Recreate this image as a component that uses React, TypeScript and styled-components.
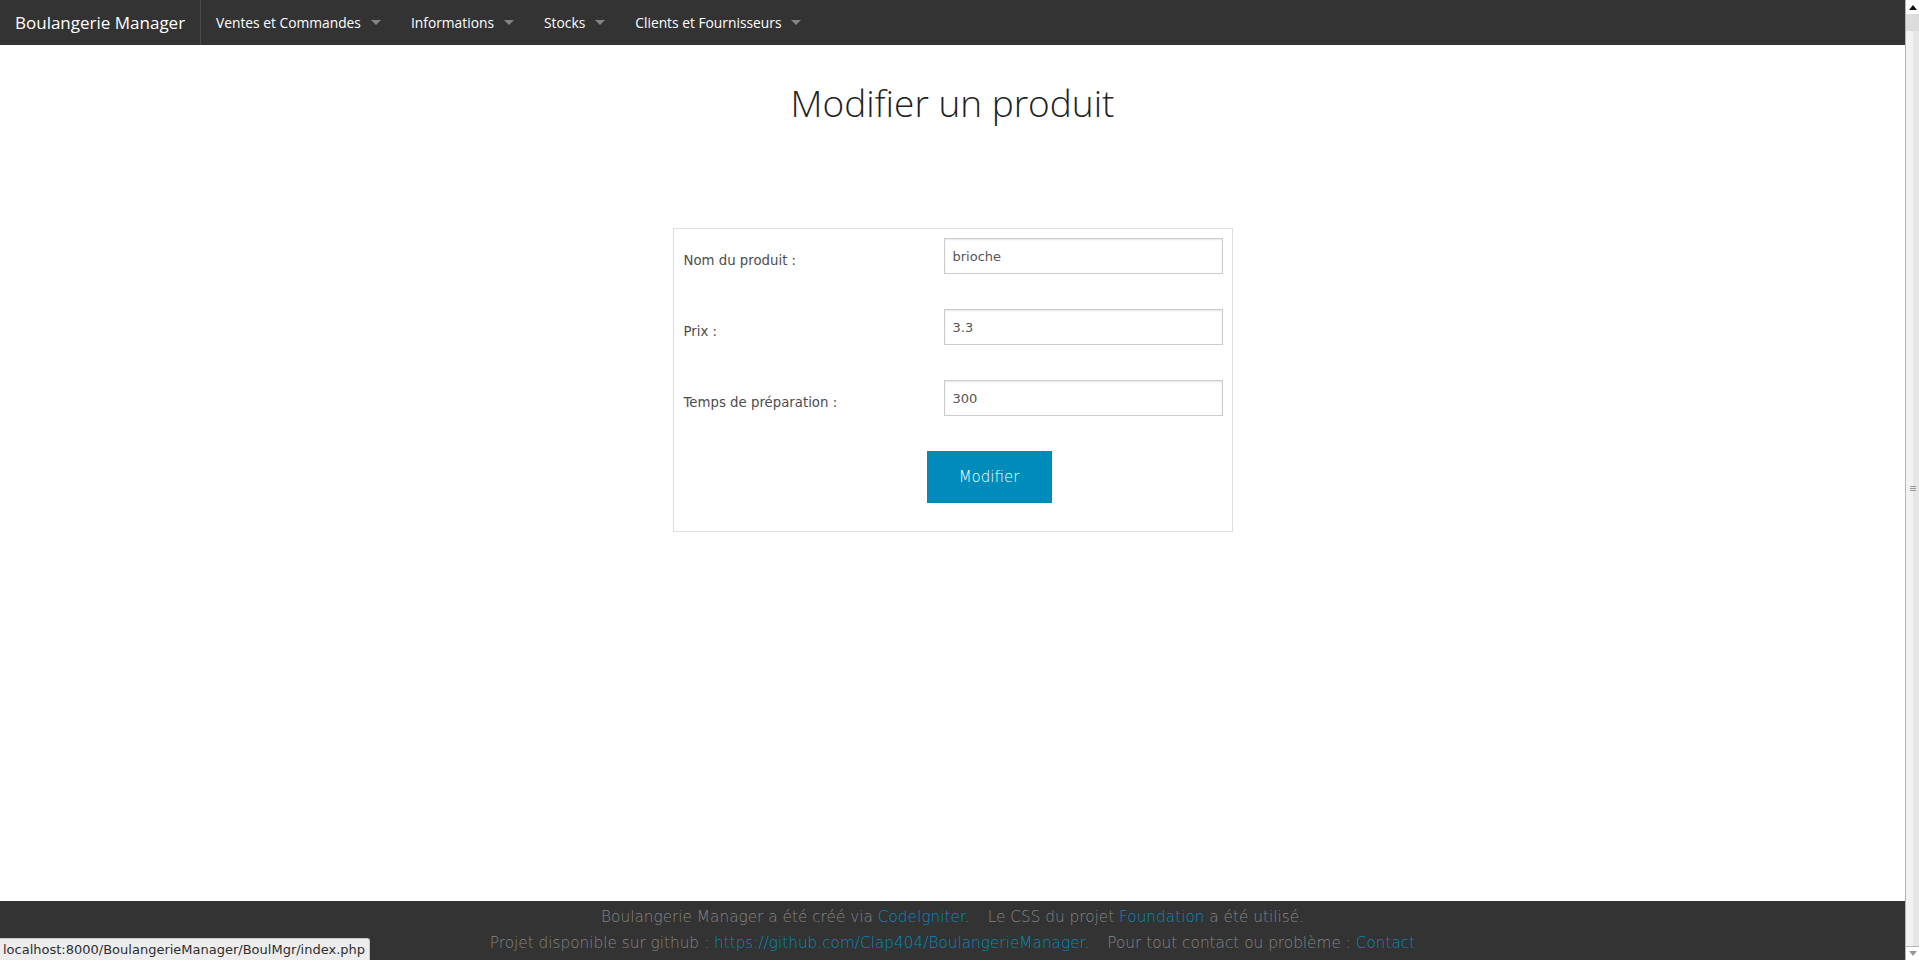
import React from "react";
import styled, { createGlobalStyle } from "styled-components";

const GlobalStyle = createGlobalStyle`
    html, body {
        margin: 0;
        padding: 0;
        height: 100%;
        overflow: hidden;
        background: #fff;
    }
    * {
        box-sizing: border-box;
    }
`;

const Shell = styled.div`
    position: relative;
    display: flex;
    width: 100vw;
    height: 100vh;
`;

const Page = styled.div`
    flex: 1;
    display: flex;
    flex-direction: column;
    min-width: 0;
`;

const TopBar = styled.nav`
    display: flex;
    align-items: stretch;
    height: 45px;
    background-color: #333;
    font-family: "Open Sans", sans-serif;
`;

const Brand = styled.a`
    display: flex;
    align-items: center;
    flex-shrink: 0;
    width: 201px;
    padding-left: 15px;
    border-right: 1px solid #4a4a4a;
    color: #fff;
    font-size: 17px;
    white-space: nowrap;
    text-decoration: none;
`;

const MenuItem = styled.a`
    position: relative;
    display: flex;
    align-items: center;
    padding: 0 35px 0 15px;
    color: #fff;
    font-size: 13.8px;
    white-space: nowrap;
    text-decoration: none;

    &::after {
        content: "";
        position: absolute;
        top: 20px;
        right: 15px;
        border: 5px solid transparent;
        border-top-color: rgba(255, 255, 255, 0.4);
    }
`;

const Content = styled.main`
    flex: 1;
    display: flex;
    flex-direction: column;
    align-items: center;
    padding-top: 36px;
`;

const Title = styled.h1`
    margin: 0;
    font-family: "Open Sans", sans-serif;
    font-weight: 300;
    font-size: 37px;
    line-height: 43px;
    color: #222;
`;

const FormBox = styled.form`
    display: grid;
    grid-template-columns: 260px 279px;
    row-gap: 35px;
    margin-top: 104px;
    width: 560px;
    padding: 9px 10px 28px;
    border: 1px solid #ddd;
`;

const Label = styled.label`
    padding-top: 15px;
    font-family: "DejaVu Sans", sans-serif;
    font-size: 13.3px;
    color: #4d4d4d;
`;

const Field = styled.input`
    height: 36px;
    width: 279px;
    padding: 0 8px;
    border: 1px solid #ccc;
    box-shadow: inset 0 1px 2px rgba(0, 0, 0, 0.1);
    font-family: "DejaVu Sans", sans-serif;
    font-size: 13px;
    color: #555;
    background: #fff;
    outline: none;
`;

const ButtonRow = styled.div`
    grid-column: 1 / span 2;
    padding-left: 243px;
`;

const SubmitButton = styled.button`
    width: 125px;
    height: 52px;
    border: none;
    background-color: #008cba;
    color: #fff;
    font-family: "DejaVu Sans", sans-serif;
    font-weight: 200;
    font-size: 15px;
    cursor: pointer;
`;

const Footer = styled.footer`
    padding: 3px 0 4px;
    background-color: #333;
    text-align: center;
    font-family: "DejaVu Sans", sans-serif;
    font-weight: 200;
    font-size: 15.3px;
    line-height: 26px;
    color: #858585;
`;

const FooterLink = styled.a`
    color: #008cba;
    text-decoration: none;
`;

const Gap = styled.span`
    display: inline-block;
    width: 18px;
`;

const StatusBar = styled.div`
    position: absolute;
    left: 0;
    bottom: 0;
    height: 22px;
    padding: 0 4px 0 3px;
    background: #ededed;
    border-top: 1px solid #c8c8c8;
    border-right: 1px solid #c8c8c8;
    border-top-right-radius: 3px;
    font-family: "DejaVu Sans", sans-serif;
    font-size: 13px;
    line-height: 21px;
    color: #2e2e2e;
`;

const Scrollbar = styled.div`
    display: flex;
    flex-direction: column;
    width: 14px;
    border-left: 1px solid #b5b5b5;
    background: #dcdcdc;
`;

const ScrollArrow = styled.div<{ down?: boolean }>`
    display: flex;
    align-items: center;
    justify-content: center;
    height: 14px;
    background: #fff;
    border-top: ${p => (p.down ? "1px solid #b5b5b5" : "none")};
`;

const Thumb = styled.div`
    flex: 1;
    display: flex;
    align-items: center;
    justify-content: center;
    margin-top: 17px;
    background: linear-gradient(to right, #f2f2f2 0, #f2f2f2 55%, #e6e6e6 55%);
`;

const Grip = styled.div`
    width: 6px;
    height: 5px;
    border-top: 1px solid #999;
    border-bottom: 1px solid #999;
    position: relative;

    &::after {
        content: "";
        position: absolute;
        left: 0;
        right: 0;
        top: 1px;
        border-top: 1px solid #999;
    }
`;

const menu = ["Ventes et Commandes", "Informations", "Stocks", "Clients et Fournisseurs"];

const fields = [
    { label: "Nom du produit :", value: "brioche" },
    { label: "Prix :", value: "3.3" },
    { label: "Temps de préparation :", value: "300" },
];

export default function App() {
    return (
        <>
            <GlobalStyle />
            <Shell>
                <Page>
                    <TopBar>
                        <Brand href="#">Boulangerie Manager</Brand>
                        {menu.map(item => (
                            <MenuItem key={item} href="#">
                                {item}
                            </MenuItem>
                        ))}
                    </TopBar>
                    <Content>
                        <Title>Modifier un produit</Title>
                        <FormBox onSubmit={e => e.preventDefault()}>
                            {fields.map(f => (
                                <React.Fragment key={f.label}>
                                    <Label>{f.label}</Label>
                                    <Field type="text" defaultValue={f.value} />
                                </React.Fragment>
                            ))}
                            <ButtonRow>
                                <SubmitButton type="submit">Modifier</SubmitButton>
                            </ButtonRow>
                        </FormBox>
                    </Content>
                    <Footer>
                        <div>
                            Boulangerie Manager a été créé via <FooterLink href="#">CodeIgniter</FooterLink>.
                            <Gap />
                            Le CSS du projet <FooterLink href="#">Foundation</FooterLink> a été utilisé.
                        </div>
                        <div>
                            Projet disponible sur github :{" "}
                            <FooterLink href="#">https://github.com/Clap404/BoulangerieManager</FooterLink>.
                            <Gap />
                            Pour tout contact ou problème : <FooterLink href="#">Contact</FooterLink>
                        </div>
                    </Footer>
                </Page>
                <Scrollbar>
                    <ScrollArrow>
                        <svg width="8" height="5" viewBox="0 0 8 5">
                            <path d="M0 5 L4 0 L8 5 Z" fill="#111" />
                        </svg>
                    </ScrollArrow>
                    <Thumb>
                        <Grip />
                    </Thumb>
                    <ScrollArrow down>
                        <svg width="8" height="5" viewBox="0 0 8 5">
                            <path d="M0 0 L4 5 L8 0 Z" fill="#999" />
                        </svg>
                    </ScrollArrow>
                </Scrollbar>
                <StatusBar>localhost:8000/BoulangerieManager/BoulMgr/index.php</StatusBar>
            </Shell>
        </>
    );
}
